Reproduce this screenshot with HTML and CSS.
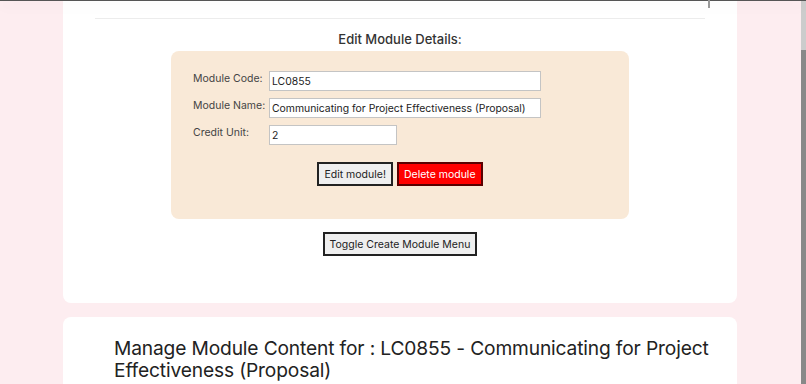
FILE: index.html
```html
<!DOCTYPE html>
<html lang="en">
<head>
  <meta charset="UTF-8" />
  <meta name="viewport" content="width=device-width, initial-scale=1.0"/>
  <title>Manage Module</title>
  <link rel="stylesheet" href="styles.css">
</head>
<body>
  <div class="top-shadow"></div>
  <div class="inner-thumb"></div>
  <div class="page-scrollbar"><div class="page-thumb"></div></div>

  <div class="container">
    <div class="card card-first">
      <hr class="divider">
      <h3>Edit Module Details:</h3>

      <div class="edit-box">
        <div class="field-grid">
          <label for="moduleCode">Module Code:</label>
          <input id="moduleCode" type="text" value="LC0855">

          <label for="moduleName">Module Name:</label>
          <input id="moduleName" type="text" value="Communicating for Project Effectiveness (Proposal)">

          <label for="creditUnit">Credit Unit:</label>
          <input id="creditUnit" class="input-short" type="text" value="2">
        </div>

        <div class="actions">
          <button class="btn-edit">Edit module!</button>
          <button class="btn-delete">Delete module</button>
        </div>
      </div>

      <div class="actions actions-toggle">
        <button class="btn-toggle">Toggle Create Module Menu</button>
      </div>
    </div>

    <div class="card card-content">
      <h2>Manage Module Content for : LC0855 - Communicating for Project Effectiveness (Proposal)</h2>
    </div>
  </div>
</body>
</html>
```

FILE: styles.css
```css
html, body {
  margin: 0;
  height: 100%;
  overflow: hidden;
}

body {
  font-family: 'Inter', 'Open Sans', sans-serif;
  background-color: #fdedf0;
  color: #333;
}

.container {
  width: 674px;
  margin-left: 63px;
}

.card {
  background: white;
  border-radius: 0 0 8px 8px;
  padding: 0 32px;
}

.card-first {
  padding-top: 18px;
  padding-bottom: 47px;
}

.card-content {
  margin-top: 14px;
  border-radius: 8px;
  padding: 20px 4px 20px 51px;
  height: 200px;
}

.divider {
  border: none;
  border-top: 1px solid #ececec;
  margin: 0;
}

h3 {
  text-align: center;
  font-size: 13px;
  font-weight: 500;
  margin: 12px 0 4px;
  color: #333;
}

.edit-box {
  width: 458px;
  margin: 0 auto;
  box-sizing: border-box;
  background: #f9e9d7;
  border-radius: 8px;
  padding: 20px 22px 33px;
}

.field-grid {
  display: grid;
  grid-template-columns: 76px auto;
  row-gap: 7px;
  align-items: start;
  justify-items: start;
}

label {
  font-size: 10.5px;
  color: #444;
  padding-top: 1px;
}

input {
  font-family: inherit;
  font-size: 10.4px;
  width: 272px;
  height: 20px;
  box-sizing: border-box;
  border: 1px solid #c4c4c4;
  padding: 0 2px;
  color: #222;
}

.input-short {
  width: 128px;
}

.actions {
  display: flex;
  justify-content: center;
  gap: 4px;
  margin-top: 17px;
}

.actions-toggle {
  margin-top: 13px;
}

button {
  font-family: inherit;
  font-size: 10.5px;
  height: 24px;
  padding: 0 5px;
  border: 2px solid #222;
  cursor: pointer;
}

.btn-edit { background-color: #efefef; color: #222; }
.btn-delete { background-color: #ff0000; color: white; border-color: #5a0000; }
.btn-toggle { background-color: #efefef; color: #222; }

h2 {
  font-size: 19.2px;
  font-weight: 400;
  line-height: 22px;
  letter-spacing: -0.15px;
  color: #222;
  margin: 0;
}

.top-shadow {
  position: fixed;
  top: 0;
  left: 0;
  right: 0;
  height: 1px;
  background: #555;
  box-shadow: 0 3px 14px rgba(0, 0, 0, 0.2);
  z-index: 5;
}

.inner-thumb {
  position: fixed;
  top: 0;
  left: 708px;
  width: 2px;
  height: 8px;
  background: #999;
  z-index: 6;
}

.page-scrollbar {
  position: fixed;
  top: 0;
  right: 0;
  width: 5px;
  height: 100%;
  background: #ccc;
}

.page-thumb {
  margin-top: 50px;
  height: 334px;
  background: #888;
}
```
